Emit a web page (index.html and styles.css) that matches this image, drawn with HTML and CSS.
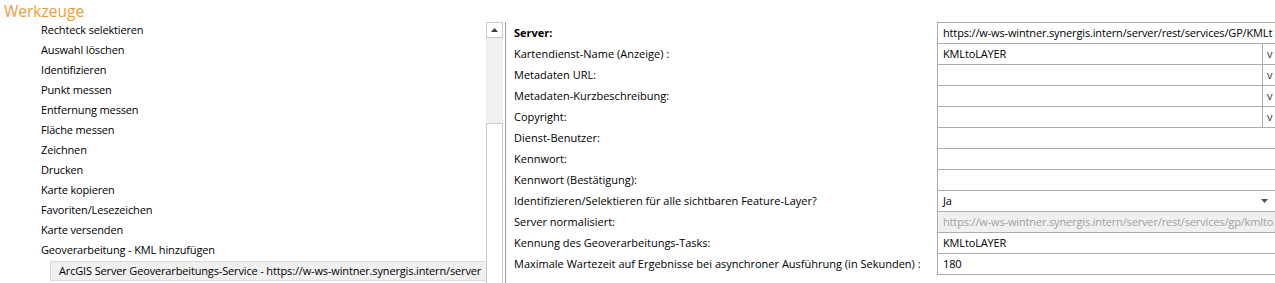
FILE: index.html
```html
<!DOCTYPE html>
<html lang="de">
<head>
<meta charset="utf-8">
<title>Werkzeuge</title>
<link rel="stylesheet" href="styles.css">
</head>
<body>
<div class="title">Werkzeuge</div>
<div class="main">
  <div class="left">
    <div class="tree">
      <div class="item">Rechteck selektieren</div>
      <div class="item">Auswahl löschen</div>
      <div class="item">Identifizieren</div>
      <div class="item">Punkt messen</div>
      <div class="item">Entfernung messen</div>
      <div class="item">Fläche messen</div>
      <div class="item">Zeichnen</div>
      <div class="item">Drucken</div>
      <div class="item">Karte kopieren</div>
      <div class="item">Favoriten/Lesezeichen</div>
      <div class="item">Karte versenden</div>
      <div class="item">Geoverarbeitung - KML hinzufügen</div>
      <div class="item sub"><span class="sel">ArcGIS Server Geoverarbeitungs-Service - https://w-ws-wintner.synergis.intern/server</span></div>
    </div>
    <div class="scrollbar">
      <div class="sb-up"><svg width="7" height="4" viewBox="0 0 7 4"><path d="M0 4 L3.5 0 L7 4 Z" fill="#404040"/></svg></div>
      <div class="sb-track"></div>
      <div class="sb-thumb"></div>
    </div>
    <div class="splitter"></div>
  </div>
  <div class="props">
    <div class="prow"><div class="plabel bold">Server:</div><div class="pval"><span class="ptext">https://w-ws-wintner.synergis.intern/server/rest/services/GP/KMLt</span></div></div>
    <div class="prow"><div class="plabel">Kartendienst-Name (Anzeige) :</div><div class="pval"><span class="ptext">KMLtoLAYER</span><span class="vbtn">v</span></div></div>
    <div class="prow"><div class="plabel">Metadaten URL:</div><div class="pval"><span class="ptext"></span><span class="vbtn">v</span></div></div>
    <div class="prow"><div class="plabel">Metadaten-Kurzbeschreibung:</div><div class="pval"><span class="ptext"></span><span class="vbtn">v</span></div></div>
    <div class="prow"><div class="plabel">Copyright:</div><div class="pval"><span class="ptext"></span><span class="vbtn">v</span></div></div>
    <div class="prow"><div class="plabel">Dienst-Benutzer:</div><div class="pval"><span class="ptext"></span></div></div>
    <div class="prow"><div class="plabel">Kennwort:</div><div class="pval"><span class="ptext"></span></div></div>
    <div class="prow"><div class="plabel">Kennwort (Bestätigung):</div><div class="pval"><span class="ptext"></span></div></div>
    <div class="prow"><div class="plabel">Identifizieren/Selektieren für alle sichtbaren Feature-Layer?</div><div class="pval"><span class="ptext">Ja</span><span class="ddarrow"><svg width="7" height="4" viewBox="0 0 7 4"><path d="M0 0 L7 0 L3.5 4 Z" fill="#505050"/></svg></span></div></div>
    <div class="prow"><div class="plabel">Server normalisiert:</div><div class="pval disabled"><span class="ptext">https://w-ws-wintner.synergis.intern/server/rest/services/gp/kmlto</span></div></div>
    <div class="prow"><div class="plabel">Kennung des Geoverarbeitungs-Tasks:</div><div class="pval"><span class="ptext">KMLtoLAYER</span></div></div>
    <div class="prow last"><div class="plabel">Maximale Wartezeit auf Ergebnisse bei asynchroner Ausführung (in Sekunden) :</div><div class="pval"><span class="ptext">180</span></div></div>
  </div>
</div>
</body>
</html>
```

FILE: styles.css
```css
* { box-sizing: border-box; }
html, body { margin: 0; padding: 0; background: #ffffff; }
body {
  width: 1275px;
  height: 283px;
  overflow: hidden;
  font-family: "Open Sans", "Noto Sans", "DejaVu Sans", sans-serif;
  font-size: 11px;
  color: #000000;
}
.title {
  height: 20px;
  padding-left: 4px;
  font-size: 15.5px;
  line-height: 22px;
  color: #ed9b3e;
  font-weight: 400;
}
.main {
  display: flex;
  height: 263px;
}
.left {
  display: flex;
  width: 506px;
  flex: none;
}
.tree {
  width: 486px;
  flex: none;
  letter-spacing: -0.15px;
}
.item {
  height: 20px;
  line-height: 20px;
  padding-left: 41px;
  white-space: nowrap;
}
.item.sub {
  padding-left: 50px;
  padding-top: 1px;
}
.sel {
  display: block;
  height: 20px;
  line-height: 18px;
  padding-left: 8px;
  background: #f0f0f0;
  border: 1px solid #dadada;
  border-right: none;
  overflow: hidden;
}
.scrollbar {
  width: 17px;
  flex: none;
  display: flex;
  flex-direction: column;
  padding-top: 2px;
}
.sb-up {
  height: 16px;
  border: 1px solid #c8c8c8;
  background: #ffffff;
  display: flex;
  align-items: center;
  justify-content: center;
}
.sb-track {
  height: 85px;
  background: #f0f0f0;
}
.sb-thumb {
  flex: 1;
  background: #ffffff;
  border: 1px solid #c8c8c8;
  border-bottom: none;
}
.splitter {
  width: 3px;
  flex: none;
  margin-top: 2px;
  border-right: 1px solid #a0a0a0;
}
.props {
  flex: 1;
  padding-top: 2px;
  min-width: 0;
}
.prow {
  display: flex;
  height: 21px;
}
.plabel {
  width: 431px;
  flex: none;
  padding-left: 8px;
  line-height: 21px;
  white-space: nowrap;
}
.bold { font-weight: 700; }
.pval {
  flex: 1;
  display: flex;
  border-top: 1px solid #acacac;
  border-left: 1px solid #acacac;
  line-height: 19px;
  white-space: nowrap;
  overflow: hidden;
  min-width: 0;
  letter-spacing: -0.15px;
}
.prow.last .pval { border-bottom: 1px solid #acacac; height: 22px; }
.ptext {
  flex: 1;
  padding-left: 5px;
  overflow: hidden;
  min-width: 0;
}
.vbtn {
  width: 13px;
  flex: none;
  border-left: 1px solid #acacac;
  padding-left: 4px;
  color: #303030;
}
.ddarrow {
  width: 14px;
  flex: none;
  display: flex;
  align-items: center;
}
.disabled {
  background: #f0f0f0;
  color: #a0a0a0;
}
```
